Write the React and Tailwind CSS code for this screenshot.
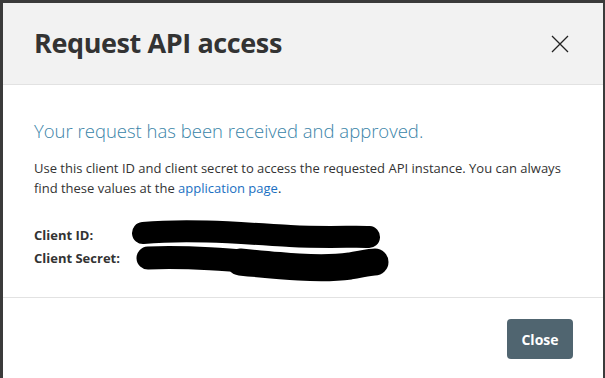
import React from 'react'

const font = { fontFamily: '"Open Sans", "Noto Sans", sans-serif' }

const Redaction = () => (
    <svg className="absolute left-0 top-0 pointer-events-none" width="605" height="378" viewBox="0 0 605 378">
        <path d="M143 233 C 190 229, 240 233, 290 236 C 330 238, 355 236, 369 237" stroke="#000" strokeWidth="22" strokeLinecap="round" fill="none" />
        <path d="M148 258 C 200 256, 250 262, 300 266 C 330 268, 355 265, 374 262" stroke="#000" strokeWidth="23" strokeLinecap="round" fill="none" />
        <path d="M240 262 C 280 266, 320 270, 350 266 C 362 264, 370 262, 375 262" stroke="#000" strokeWidth="27" strokeLinecap="round" fill="none" />
    </svg>
)

const App = () => {
    return (
        <div className="relative w-[605px] h-[378px] bg-[#3b3b3b] pt-[3px] pl-[3px] pr-[2px] overflow-hidden" style={font}>
            <div className="bg-white h-full flex flex-col">
                <div className="h-[82px] shrink-0 bg-[#f2f2f2] border-b border-[#e2e2e2] flex items-center justify-between pl-[31px] pr-[34px]">
                    <h2 className="text-[27px] font-bold text-[#333] tracking-[-0.4px]">Request API access</h2>
                    <button className="text-[#222]">
                        <svg width="18" height="18" viewBox="0 0 18 18">
                            <path d="M1 1 L17 17 M17 1 L1 17" stroke="#222" strokeWidth="1.3" fill="none" />
                        </svg>
                    </button>
                </div>

                <div className="h-[213px] shrink-0 border-b border-[#e2e2e2] pl-[31px] pr-[10px] pt-[34px]">
                    <h3 className="text-[18.5px] font-light text-[#3a84a8] leading-[24px]">
                        Your request has been received and approved.
                    </h3>
                    <p className="mt-[15px] text-[13px] leading-[20px] text-[#333] whitespace-nowrap">
                        Use this client ID and client secret to access the requested API instance. You can always
                        <br />
                        find these values at the <span className="text-[#1a6fc2]">application page</span>.
                    </p>
                    <div className="mt-[26px] text-[13px] font-bold text-[#333] leading-[23px]">
                        <div>Client ID:</div>
                        <div>Client Secret:</div>
                    </div>
                </div>

                <div className="flex justify-end pr-[30px] pt-[21px]">
                    <button className="w-[66px] h-[40px] rounded-[4px] bg-[#506570] text-white text-[14px] font-bold">
                        Close
                    </button>
                </div>
            </div>
            <Redaction />
        </div>
    )
}

export default App
